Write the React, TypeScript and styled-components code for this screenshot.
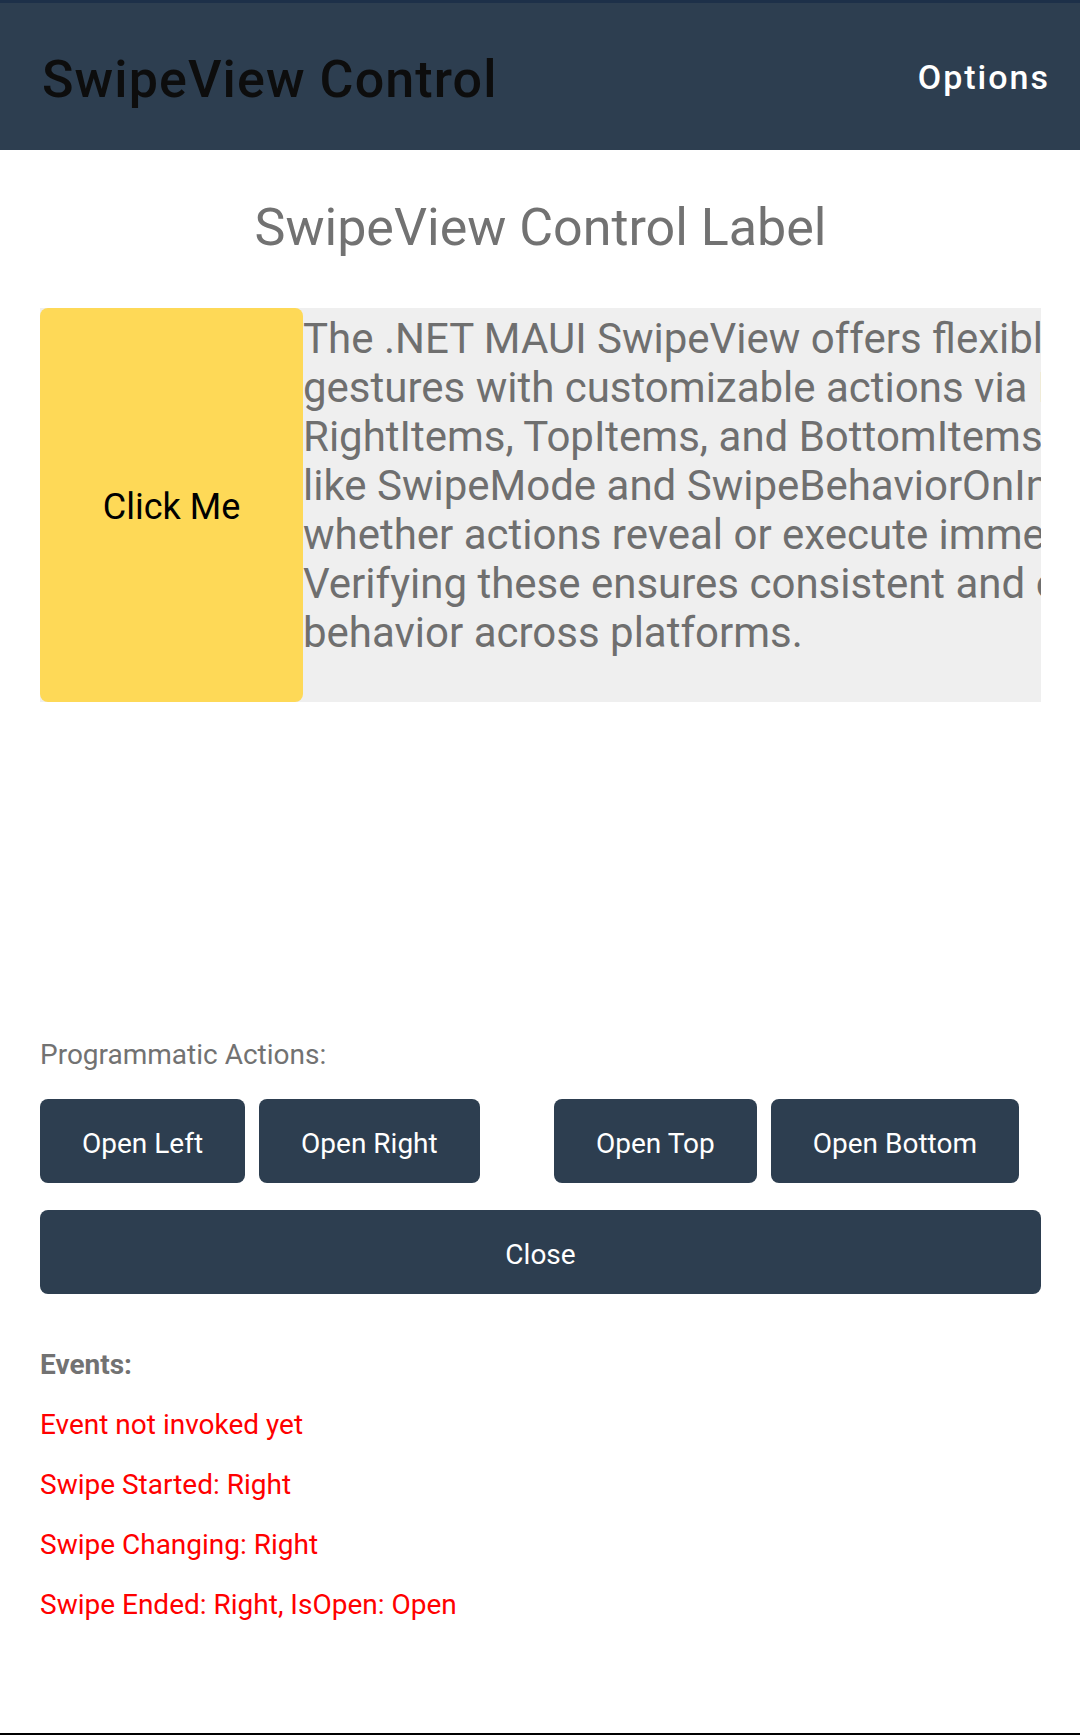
import React from 'react';
import styled, {createGlobalStyle} from 'styled-components';

const GlobalStyle = createGlobalStyle`
  html, body {
    margin: 0;
    padding: 0;
    background: #ffffff;
  }
  body {
    font-family: Roboto, "Noto Sans", "Liberation Sans", sans-serif;
  }
  * {
    box-sizing: border-box;
  }
`;

const description = [
  'The .NET MAUI SwipeView offers flexible swipe',
  'gestures with customizable actions via LeftItems,',
  'RightItems, TopItems, and BottomItems. Properties',
  'like SwipeMode and SwipeBehaviorOnInvoked define',
  'whether actions reveal or execute immediately.',
  'Verifying these ensures consistent and expected',
  'behavior across platforms.',
];

const events = [
  'Event not invoked yet',
  'Swipe Started: Right',
  'Swipe Changing: Right',
  'Swipe Ended: Right, IsOpen: Open',
];

export default function App() {
  return (
    <>
      <GlobalStyle />
      <Screen>
        <Toolbar>
          <ToolbarTitle>SwipeView Control</ToolbarTitle>
          <ToolbarAction>Options</ToolbarAction>
        </Toolbar>

        <Page>
          <PageLabel>SwipeView Control Label</PageLabel>

          <SwipeFrame>
            <SwipeItem>Click Me</SwipeItem>
            <SwipeContent>
              {description.map(line => (
                <ContentLine key={line}>{line}</ContentLine>
              ))}
            </SwipeContent>
          </SwipeFrame>

          <SectionLabel>Programmatic Actions:</SectionLabel>
          <ActionGrid>
            <ButtonPair>
              <ActionButton>Open Left</ActionButton>
              <ActionButton>Open Right</ActionButton>
            </ButtonPair>
            <ButtonPair>
              <ActionButton>Open Top</ActionButton>
              <ActionButton>Open Bottom</ActionButton>
            </ButtonPair>
            <ActionButton $wide>Close</ActionButton>
          </ActionGrid>

          <EventList>
            <SectionLabel $bold>Events:</SectionLabel>
            {events.map(e => (
              <EventText key={e}>{e}</EventText>
            ))}
          </EventList>
        </Page>

        <NavEdge />
      </Screen>
    </>
  );
}

const Screen = styled.div`
  min-height: 1735px;
  display: flex;
  flex-direction: column;
`;

const Toolbar = styled.header`
  height: 150px;
  border-top: 3px solid #1d3049;
  background: #2d3e50;
  display: flex;
  align-items: center;
  justify-content: space-between;
  padding: 0 30px 0 42px;
`;

const ToolbarTitle = styled.h1`
  margin: 6px 0 0;
  font-size: 52px;
  font-weight: 500;
  letter-spacing: 1.1px;
  line-height: 61px;
  color: #0d0d0d;
`;

const ToolbarAction = styled.span`
  margin-top: 1px;
  font-size: 34px;
  font-weight: 500;
  letter-spacing: 2px;
  line-height: 40px;
  color: #ffffff;
`;

const Page = styled.main`
  display: flex;
  flex-direction: column;
  padding: 47px 39px 0 40px;
`;

const PageLabel = styled.div`
  text-align: center;
  font-size: 52px;
  line-height: 61px;
  color: #727272;
`;

const SwipeFrame = styled.div`
  margin-top: 50px;
  height: 394px;
  display: flex;
  overflow: hidden;
  background: #efefef;
`;

const SwipeItem = styled.div`
  flex: 0 0 263px;
  display: flex;
  align-items: center;
  justify-content: center;
  padding-top: 3px;
  border-radius: 8px;
  background: #fed957;
  font-size: 36px;
  color: #000000;
`;

const SwipeContent = styled.div`
  flex: 0 0 100%;
  padding-top: 6px;
  font-size: 42px;
  line-height: 49px;
  color: #6f6f6f;
  white-space: nowrap;
`;

const ContentLine = styled.div``;

const SectionLabel = styled.div<{$bold?: boolean}>`
  margin-top: ${p => (p.$bold ? '0' : '336px')};
  font-size: 28px;
  line-height: 33px;
  font-weight: ${p => (p.$bold ? 700 : 400)};
  color: #727272;
`;

const ActionGrid = styled.div`
  margin-top: 28px;
  display: grid;
  grid-template-columns: 1fr 1fr;
  gap: 27px;
`;

const ButtonPair = styled.div`
  display: flex;
  gap: 14px;
`;

const ActionButton = styled.button<{$wide?: boolean}>`
  grid-column: ${p => (p.$wide ? '1 / -1' : 'auto')};
  height: 84px;
  padding: 4px 42px 0;
  border: none;
  border-radius: 8px;
  background: #2d3e50;
  color: #ffffff;
  font-family: inherit;
  font-size: 28px;
  white-space: nowrap;
`;

const EventList = styled.div`
  margin-top: 54px;
  display: flex;
  flex-direction: column;
  gap: 27px;
`;

const EventText = styled.div`
  font-size: 28px;
  line-height: 33px;
  color: #ff0000;
`;

const NavEdge = styled.div`
  margin-top: auto;
  height: 2px;
  background: #000000;
`;
